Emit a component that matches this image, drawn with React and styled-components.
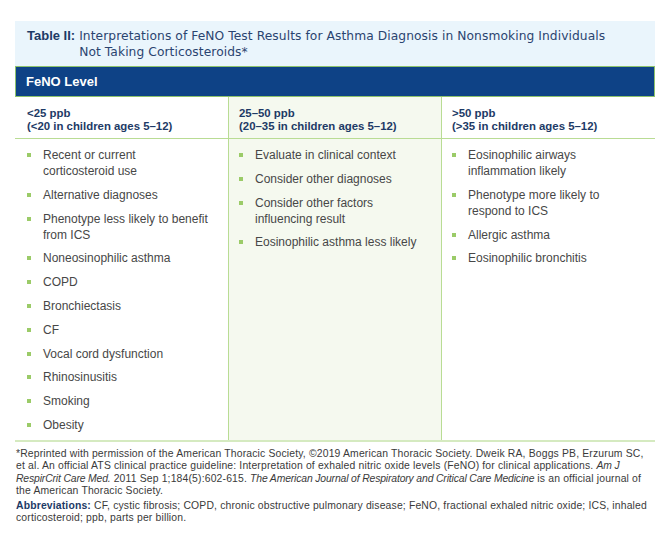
import React from "react";
import styled, { createGlobalStyle } from "styled-components";

const Global = createGlobalStyle`
  html, body { margin: 0; padding: 0; background: #ffffff; }
  body { font-family: "Liberation Sans", Arial, sans-serif; }
`;

const Page = styled.div`
  width: 640px;
  padding: 21px 17px 0 15px;
`;

const TitleBox = styled.div`
  background: #eaf5fc;
  height: 45px;
  box-sizing: border-box;
  padding: 7px 6px 0 12px;
  display: flex;
  gap: 4px;
  font-size: 13px;
  line-height: 16px;
  color: #1d3a66;
`;

const TitleLabel = styled.span`
  font-weight: bold;
  white-space: nowrap;
`;

const TitleText = styled.span`
  font-family: "DejaVu Sans", "Liberation Sans", sans-serif;
  font-size: 12.25px;
  letter-spacing: 0.08px;
  white-space: nowrap;
  color: #2a4470;
`;

const HeadBar = styled.div`
  background: #0e4286;
  border: 1px solid #8dc26c;
  height: 29px;
  display: flex;
  align-items: center;
  padding-left: 10px;
  color: #ffffff;
  font-weight: bold;
  font-size: 13px;
`;

const Grid = styled.div`
  display: grid;
  grid-template-columns: 213px 213px 214px;
  border-bottom: 2px solid #d5eac0;
`;

const Column = styled.div`
  background: ${(p) => (p.$tint ? "#f5f9ef" : "#ffffff")};
  border-left: ${(p) => (p.$divider ? "1px solid #b9dc94" : "none")};
  display: flex;
  flex-direction: column;
`;

const ColHead = styled.div`
  height: 42px;
  box-sizing: border-box;
  border-bottom: 1px solid #b9dc94;
  padding: 10px 0 0 ${(p) => (p.$divider ? "10px" : "12px")};
  font-weight: bold;
  font-size: 11.4px;
  line-height: 13px;
  color: #1d3a66;
`;

const List = styled.ul`
  list-style: none;
  margin: 0;
  padding: 8px 8px 7px ${(p) => (p.$divider ? "10px" : "12px")};
  display: flex;
  flex-direction: column;
  gap: 7.8px;
`;

const Item = styled.li`
  display: flex;
  gap: 12px;
  font-size: 12px;
  line-height: 16px;
  color: #474747;
`;

const Bullet = styled.span`
  flex: none;
  width: 4px;
  height: 4px;
  margin-top: 6px;
  background: #9bcb68;
`;

const ItemText = styled.span`
  white-space: pre-line;
`;

const Notes = styled.div`
  padding: 6px 0 0 1px;
  font-size: 10.4px;
  line-height: 12.4px;
  color: #3a3a3a;
  letter-spacing: 0.16px;
  white-space: nowrap;
`;

const Para = styled.p`
  margin: 0 0 2px 0;
`;

const Em = styled.i`
  letter-spacing: -0.15px;
`;

const Strong = styled.span`
  font-weight: bold;
  color: #1d3a66;
`;

const columns = [
  {
    head: ["<25 ppb", "(<20 in children ages 5–12)"],
    items: [
      "Recent or current\ncorticosteroid use",
      "Alternative diagnoses",
      "Phenotype less likely to benefit\nfrom ICS",
      "Noneosinophilic asthma",
      "COPD",
      "Bronchiectasis",
      "CF",
      "Vocal cord dysfunction",
      "Rhinosinusitis",
      "Smoking",
      "Obesity",
    ],
  },
  {
    head: ["25–50 ppb", "(20–35 in children ages 5–12)"],
    items: [
      "Evaluate in clinical context",
      "Consider other diagnoses",
      "Consider other factors\ninfluencing result",
      "Eosinophilic asthma less likely",
    ],
    tint: true,
  },
  {
    head: [">50 ppb", "(>35 in children ages 5–12)"],
    items: [
      "Eosinophilic airways\ninflammation likely",
      "Phenotype more likely to\nrespond to ICS",
      "Allergic asthma",
      "Eosinophilic bronchitis",
    ],
  },
];

export default function App() {
  return (
    <>
      <Global />
      <Page>
        <TitleBox>
          <TitleLabel>Table II:</TitleLabel>
          <TitleText>
            Interpretations of FeNO Test Results for Asthma Diagnosis in Nonsmoking Individuals
            <br />
            Not Taking Corticosteroids*
          </TitleText>
        </TitleBox>
        <HeadBar>FeNO Level</HeadBar>
        <Grid>
          {columns.map((c, i) => (
            <Column key={i} $tint={c.tint} $divider={i > 0}>
              <ColHead $divider={i > 0}>
                {c.head[0]}
                <br />
                {c.head[1]}
              </ColHead>
              <List $divider={i > 0}>
                {c.items.map((t) => (
                  <Item key={t}>
                    <Bullet />
                    <ItemText>{t}</ItemText>
                  </Item>
                ))}
              </List>
            </Column>
          ))}
        </Grid>
        <Notes>
          <Para>
            *Reprinted with permission of the American Thoracic Society, ©2019 American Thoracic Society. Dweik RA, Boggs PB, Erzurum SC,
            <br />
            et al. An official ATS clinical practice guideline: Interpretation of exhaled nitric oxide levels (FeNO) for clinical applications. <Em>Am J</Em>
            <br />
            <Em>RespirCrit Care Med.</Em> 2011 Sep 1;184(5):602-615. <Em>The American Journal of Respiratory and Critical Care Medicine</Em> is an official journal of
            <br />
            the American Thoracic Society.
          </Para>
          <Para>
            <Strong>Abbreviations:</Strong> CF, cystic fibrosis; COPD, chronic obstructive pulmonary disease; FeNO, fractional exhaled nitric oxide; ICS, inhaled
            <br />
            corticosteroid; ppb, parts per billion.
          </Para>
        </Notes>
      </Page>
    </>
  );
}
